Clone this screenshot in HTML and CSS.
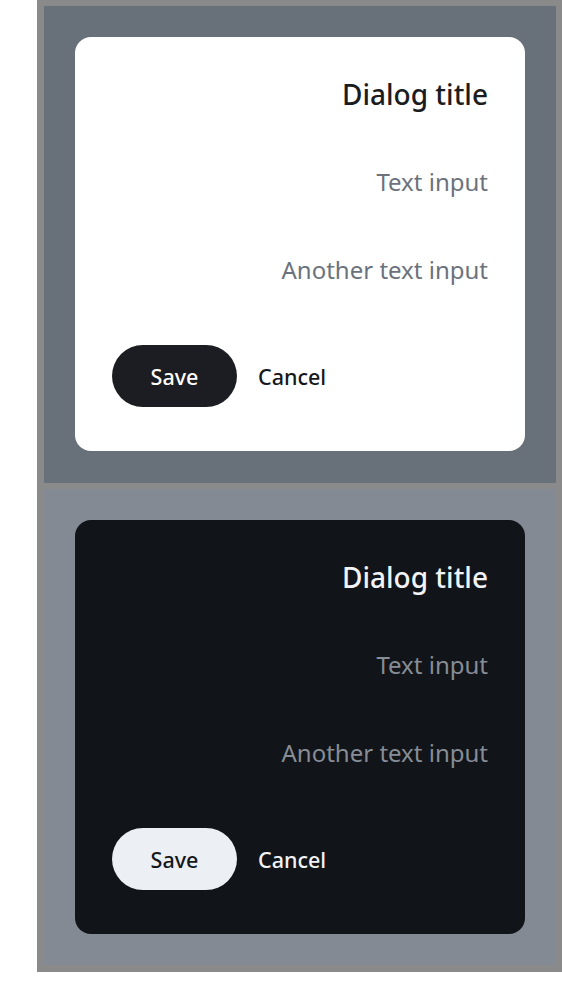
FILE: index.html
```html
<!DOCTYPE html>
<html lang="en">
<head>
<meta charset="utf-8">
<title>Dialog</title>
<link rel="stylesheet" href="styles.css">
</head>
<body>
<div class="frame">
  <section class="panel panel-light">
    <div class="dialog dialog-light">
      <h2 class="title">Dialog title</h2>
      <div class="field field-first">Text input</div>
      <div class="field field-second">Another text input</div>
      <div class="actions">
        <button class="btn btn-primary">Save</button>
        <button class="btn btn-text">Cancel</button>
      </div>
    </div>
  </section>
  <section class="panel panel-dark">
    <div class="dialog dialog-dark">
      <h2 class="title">Dialog title</h2>
      <div class="field field-first">Text input</div>
      <div class="field field-second">Another text input</div>
      <div class="actions">
        <button class="btn btn-primary">Save</button>
        <button class="btn btn-text">Cancel</button>
      </div>
    </div>
  </section>
</div>
</body>
</html>
```
FILE: styles.css
```css
* { box-sizing: border-box; }
html, body { margin: 0; padding: 0; background: #ffffff; }
body { font-family: "Noto Sans", Roboto, "Liberation Sans", sans-serif; }

.frame {
  margin-left: 37px;
  width: 525px;
  background: #8a8a8a;
  padding: 6px 6px 7px 7px;
  display: flex;
  flex-direction: column;
  gap: 6px;
}

.panel {
  padding: 31px 31px 31px 31px;
}
.panel-light { background: #687079; padding-bottom: 32px; }
.panel-dark { background: #848a94; }

.dialog {
  height: 414px;
  border-radius: 16px;
  padding: 39px 37px 44px 37px;
  display: flex;
  flex-direction: column;
}
.dialog-light { background: #ffffff; }
.dialog-dark { background: #111418; }

.title {
  margin: 0;
  font-size: 28px;
  line-height: 36px;
  font-weight: 500;
  text-align: right;
}
.dialog-light .title { color: #1b1c20; }
.dialog-dark .title { color: #f1f3f6; }

.field {
  font-size: 24px;
  line-height: 32px;
  text-align: right;
}
.field-first { margin-top: 54px; }
.field-second { margin-top: 56px; }
.dialog-light .field { color: #6b727c; }
.dialog-dark .field { color: #878d96; }

.actions {
  margin-top: 59px;
  display: flex;
  align-items: center;
  gap: 21px;
}

.btn {
  font-family: "Noto Sans", Roboto, "Liberation Sans", sans-serif;
  font-size: 21.5px;
  font-weight: 500;
  border: none;
  padding: 0;
  margin: 0;
  background: transparent;
  cursor: pointer;
}
.btn-primary {
  width: 125px;
  height: 62px;
  border-radius: 31px;
}
.dialog-light .btn-primary { background: #1c1d22; color: #ffffff; }
.dialog-dark .btn-primary { background: #eceff3; color: #15171b; }
.dialog-light .btn-text { color: #16171b; }
.dialog-dark .btn-text { color: #f1f3f6; }
```
